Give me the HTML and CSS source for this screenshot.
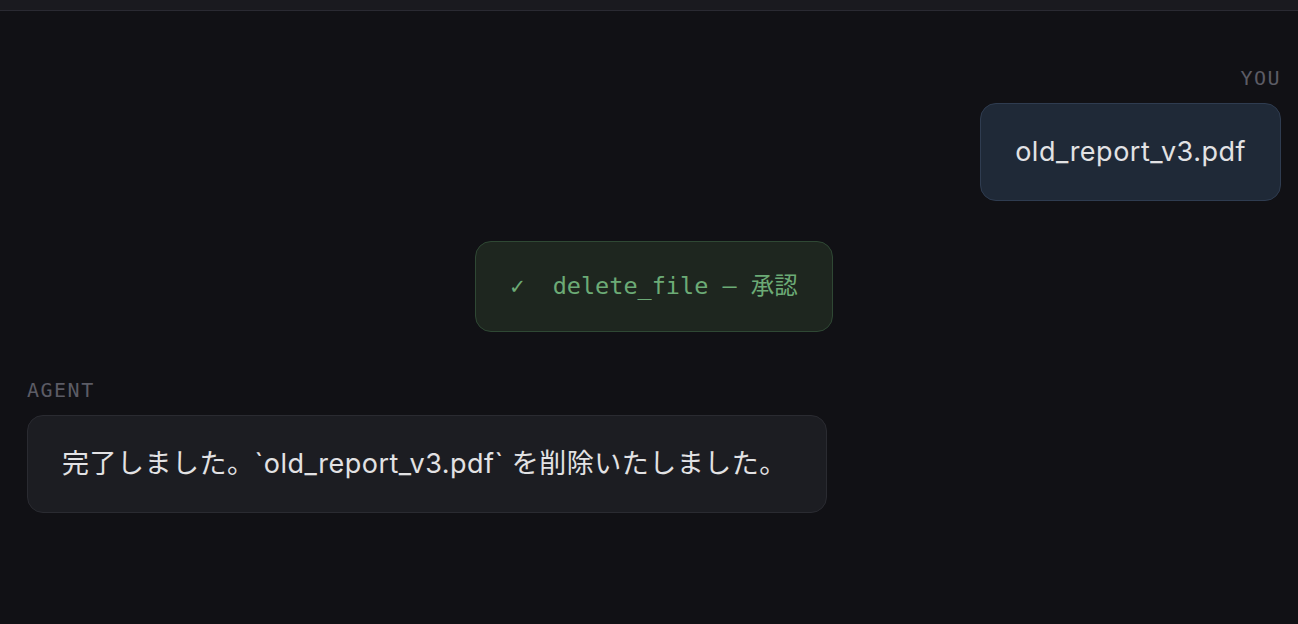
FILE: index.html
```html
<!DOCTYPE html>
<html lang="ja">
<head>
    <meta charset="UTF-8">
    <meta name="viewport" content="width=device-width, initial-scale=1.0">
    <title>Agent Chat</title>
    <link rel="stylesheet" href="styles.css">
</head>
<body>
    <header class="topbar"></header>

    <main class="chat">
        <div class="msg msg-user">
            <div class="msg-label">You</div>
            <div class="bubble bubble-user">old_report_v3.pdf</div>
        </div>

        <div class="tool-row">
            <div class="tool-pill">✓&nbsp; delete_file — 承認</div>
        </div>

        <div class="msg msg-agent">
            <div class="msg-label">Agent</div>
            <div class="bubble bubble-agent">完了しました。`old_report_v3.pdf` を削除いたしました。</div>
        </div>
    </main>
</body>
</html>
```

FILE: styles.css
```css
* {
    margin: 0;
    padding: 0;
    box-sizing: border-box;
}

body {
    background: #111115;
    color: #e4e4e7;
    font-family: 'Inter', 'Noto Sans CJK JP', sans-serif;
    min-height: 100vh;
}

.topbar {
    height: 11px;
    background: #1a1a1f;
    border-bottom: 1px solid #2a2a32;
}

.chat {
    display: flex;
    flex-direction: column;
    padding: 55px 17px 0 27px;
}

.msg {
    display: flex;
    flex-direction: column;
    gap: 13px;
}

.msg-user {
    align-items: flex-end;
}

.msg-agent {
    align-items: flex-start;
    margin-top: 46px;
}

.msg-label {
    font-family: 'DejaVu Sans Mono', monospace;
    font-size: 20px;
    line-height: 24px;
    letter-spacing: 1.5px;
    text-transform: uppercase;
    color: #5c5c65;
}

.bubble {
    font-size: 27px;
    line-height: 36px;
    letter-spacing: 0.5px;
    padding: 30px 34px;
    border-radius: 16px;
    color: #e2e2e4;
}

.bubble-user {
    background: #1f2937;
    border: 1px solid #2f3c50;
}

.bubble-agent {
    width: 800px;
    background: #1c1d22;
    border: 1px solid #2a2b31;
}

.tool-row {
    display: flex;
    justify-content: center;
    margin-top: 40px;
}

.tool-pill {
    font-family: 'DejaVu Sans Mono', 'Noto Sans CJK JP', monospace;
    font-size: 23.5px;
    line-height: 29px;
    padding: 30px 34px;
    color: #6cab76;
    background: #1e261f;
    border: 1px solid #2f4834;
    border-radius: 16px;
}
```
